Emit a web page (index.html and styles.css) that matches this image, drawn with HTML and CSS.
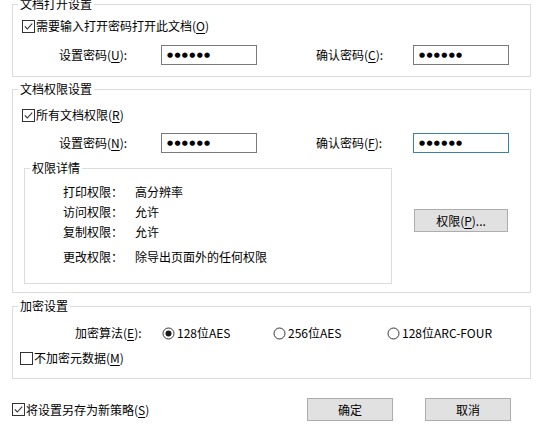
FILE: index.html
```html
<!DOCTYPE html>
<html lang="zh-CN">
<head>
<meta charset="utf-8">
<title>安全策略设置</title>
<link rel="stylesheet" href="styles.css">
</head>
<body>
<div class="dialog">
  <section class="group g-open">
    <div class="group-title">文档打开设置</div>
    <div class="check-row cr-open">
      <svg class="cb" width="13" height="13" viewBox="0 0 13 13"><rect x="0.5" y="0.5" width="12" height="12" fill="#fff" stroke="#333"/><path d="M2.8 6.4 L5.3 9 L10.2 3.6" fill="none" stroke="#333" stroke-width="1.1"/></svg>
      <span>需要输入打开密码打开此文档(<u>O</u>)</span>
    </div>
    <div class="pwd-row">
      <span class="lbl">设置密码(<u>U</u>):</span>
      <div class="pwd">●●●●●●</div>
      <span class="lbl lbl2">确认密码(<u>C</u>):</span>
      <div class="pwd">●●●●●●</div>
    </div>
  </section>

  <section class="group g-perm">
    <div class="group-title">文档权限设置</div>
    <div class="check-row cr-perm">
      <svg class="cb" width="13" height="13" viewBox="0 0 13 13"><rect x="0.5" y="0.5" width="12" height="12" fill="#fff" stroke="#333"/><path d="M2.8 6.4 L5.3 9 L10.2 3.6" fill="none" stroke="#333" stroke-width="1.1"/></svg>
      <span>所有文档权限(<u>R</u>)</span>
    </div>
    <div class="pwd-row pr-perm">
      <span class="lbl">设置密码(<u>N</u>):</span>
      <div class="pwd">●●●●●●</div>
      <span class="lbl lbl2">确认密码(<u>F</u>):</span>
      <div class="pwd pwd-focus">●●●●●●</div>
    </div>
    <div class="perm-area">
      <div class="group inner">
        <div class="group-title">权限详情</div>
        <div class="perm-row pr-first"><span class="perm-lbl">打印权限：</span><span>高分辨率</span></div>
        <div class="perm-row"><span class="perm-lbl">访问权限：</span><span>允许</span></div>
        <div class="perm-row"><span class="perm-lbl">复制权限：</span><span>允许</span></div>
        <div class="perm-row pr-last"><span class="perm-lbl">更改权限：</span><span>除导出页面外的任何权限</span></div>
      </div>
      <div class="btn btn-perm">权限(<u>P</u>)...</div>
    </div>
  </section>

  <section class="group g-enc">
    <div class="group-title">加密设置</div>
    <div class="algo-row">
      <span class="algo-lbl">加密算法(<u>E</u>):</span>
      <span class="opt opt1"><svg class="rb" width="13" height="13" viewBox="0 0 13 13"><circle cx="6.5" cy="6.5" r="5.5" fill="#fff" stroke="#333"/><circle cx="6.5" cy="6.5" r="3" fill="#1a1a1a"/></svg>128位AES</span>
      <span class="opt opt2"><svg class="rb" width="13" height="13" viewBox="0 0 13 13"><circle cx="6.5" cy="6.5" r="5.5" fill="#fff" stroke="#333"/></svg>256位AES</span>
      <span class="opt opt3"><svg class="rb" width="13" height="13" viewBox="0 0 13 13"><circle cx="6.5" cy="6.5" r="5.5" fill="#fff" stroke="#333"/></svg>128位ARC-FOUR</span>
    </div>
    <div class="check-row cr-enc">
      <svg class="cb" width="13" height="13" viewBox="0 0 13 13"><rect x="0.5" y="0.5" width="12" height="12" fill="#fff" stroke="#333"/></svg>
      <span>不加密元数据(<u>M</u>)</span>
    </div>
  </section>

  <div class="footer">
    <div class="check-row cr-foot">
      <svg class="cb" width="13" height="13" viewBox="0 0 13 13"><rect x="0.5" y="0.5" width="12" height="12" fill="#fff" stroke="#333"/><path d="M2.8 6.4 L5.3 9 L10.2 3.6" fill="none" stroke="#333" stroke-width="1.1"/></svg>
      <span>将设置另存为新策略(<u>S</u>)</span>
    </div>
    <div class="actions">
      <div class="btn btn-act">确定</div>
      <div class="btn btn-act">取消</div>
    </div>
  </div>
</div>
</body>
</html>
```

FILE: styles.css
```css
html, body {
  margin: 0;
  padding: 0;
  background: #fff;
}
body {
  width: 551px;
  height: 434px;
  overflow: hidden;
  font-family: "Noto Sans CJK SC", "Noto Sans", sans-serif;
  font-size: 12px;
  line-height: 20px;
  color: #000;
}
.dialog {
  padding-left: 12px;
}
u {
  text-decoration: underline;
  text-underline-offset: 2px;
}

.group {
  width: 519px;
  box-sizing: border-box;
  border: 1px solid #dcdcdc;
  background: #fff;
}
.group-title {
  width: fit-content;
  background: #fff;
  padding: 0 2px;
  line-height: 16px;
  height: 16px;
  margin: -9px 0 -7px 5px;
}

.check-row {
  display: flex;
  align-items: center;
  height: 20px;
}
.cb, .rb {
  flex: none;
  display: block;
}
.check-row .cb {
  margin-right: 1px;
}

/* group 1 */
.g-open {
  margin-top: 4px;
  padding-bottom: 11px;
}
.cr-open {
  margin-top: 11px;
  padding-left: 9px;
}
.pwd-row {
  display: flex;
  align-items: center;
  height: 20px;
  margin-top: 9px;
  padding-left: 46px;
}
.lbl {
  width: 102px;
  flex: none;
}
.lbl2 {
  width: 97px;
  margin-left: 59px;
}
.pwd {
  width: 96px;
  height: 20px;
  box-sizing: border-box;
  border: 1px solid #7a7a7a;
  padding-left: 5px;
  font-family: "DejaVu Sans", sans-serif;
  font-size: 7px;
  letter-spacing: 1.3px;
  line-height: 18px;
  flex: none;
}
.pwd-focus {
  border-color: #3a82ad;
}

/* group 2 */
.g-perm {
  margin-top: 12px;
  padding-bottom: 8px;
}
.cr-perm {
  margin-top: 15px;
  padding-left: 9px;
}
.pr-perm {
  margin-top: 8px;
}
.perm-area {
  display: flex;
  align-items: flex-start;
  margin-top: 15px;
  padding-left: 11px;
}
.inner {
  width: 368px;
  padding-bottom: 16px;
}
.perm-row {
  display: flex;
  height: 20px;
  padding-left: 38px;
}
.pr-first {
  margin-top: 13px;
}
.pr-last {
  margin-top: 5px;
}
.perm-lbl {
  width: 72px;
  flex: none;
}

.btn {
  box-sizing: border-box;
  height: 23px;
  line-height: 21px;
  background: #e1e1e1;
  border: 1px solid #adadad;
  text-align: center;
}
.btn-perm {
  width: 94px;
  margin-left: 22px;
  margin-top: 41px;
}

/* group 3 */
.g-enc {
  margin-top: 13px;
  padding-bottom: 10px;
}
.algo-row {
  display: flex;
  align-items: center;
  height: 20px;
  margin-top: 16px;
  padding-left: 62px;
}
.algo-lbl {
  width: 87px;
  flex: none;
}
.opt {
  display: flex;
  align-items: center;
  flex: none;
}
.opt .rb {
  margin-right: 2px;
}
.opt1 { width: 111px; }
.opt2 { width: 114px; }
.cr-enc {
  margin-top: 5px;
  padding-left: 7px;
}

/* footer */
.footer {
  display: flex;
  align-items: center;
  width: 519px;
  height: 23px;
  margin-top: 19px;
}
.actions {
  display: flex;
  gap: 32px;
  margin-left: auto;
  padding-right: 20px;
}
.btn-act {
  width: 86px;
}
```
